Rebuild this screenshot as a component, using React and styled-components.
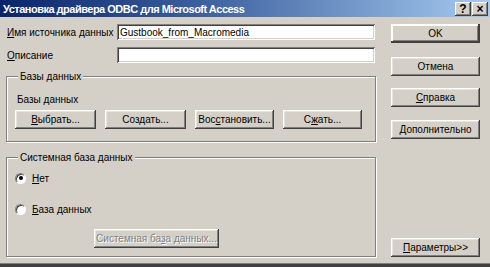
import styled, { createGlobalStyle, css } from 'styled-components';

const GlobalStyle = createGlobalStyle`
    html, body {
        margin: 0;
        padding: 0;
        background: #d4d0c8;
    }
    body {
        font-family: "Liberation Sans", Arial, sans-serif;
        font-size: 10px;
        color: #000;
    }
`;

const Window = styled.div`
    width: 490px;
    height: 267px;
    box-sizing: border-box;
    background: #d4d0c8;
    display: flex;
    flex-direction: column;
    border-bottom: 3px solid #404040;
    box-shadow: inset 0 -1px 0 #808080;
`;

const TitleBar = styled.div`
    height: 17px;
    flex: none;
    display: flex;
    align-items: center;
    padding: 0 2px 0 3px;
    background: linear-gradient(to right, #0a246a 0%, #3a5e9c 40%, #a6caf0 100%);
    color: #fff;
    font-weight: bold;
    font-size: 11px;
`;

const Title = styled.span`
    flex: 1;
    white-space: nowrap;
    letter-spacing: -0.5px;
`;

const CaptionButton = styled.button`
    width: 16px;
    height: 14px;
    padding: 0;
    margin-left: ${p => p.$gap || 0}px;
    border: none;
    background: #d4d0c8;
    color: #000;
    font-family: "Liberation Sans", Arial, sans-serif;
    font-weight: bold;
    font-size: 12px;
    line-height: 14px;
    box-shadow: inset -1px -1px #404040, inset 1px 1px #fff, inset -2px -2px #808080;
`;

const Body = styled.div`
    flex: 1;
    display: flex;
    padding: 7px 10px 0 6px;
`;

const LeftColumn = styled.div`
    width: 370px;
    display: flex;
    flex-direction: column;
`;

const RightColumn = styled.div`
    margin-left: 15px;
    width: 89px;
    display: flex;
    flex-direction: column;
`;

const FieldRow = styled.div`
    display: flex;
    align-items: center;
    height: 16px;
    margin-bottom: ${p => p.$mb || 0}px;
`;

const Label = styled.label`
    width: 110px;
    padding-left: 1px;
    white-space: nowrap;
`;

const TextInput = styled.input`
    width: 258px;
    height: 16px;
    box-sizing: border-box;
    border: none;
    padding: 1px 3px 0;
    background: #fff;
    font-family: "Liberation Sans", Arial, sans-serif;
    font-size: 10px;
    box-shadow: inset 1px 1px #808080, inset -1px -1px #fff, inset 2px 2px #404040, inset -2px -2px #d4d0c8;
    outline: none;
`;

const Group = styled.fieldset`
    margin: ${p => p.$mt || 0}px 0 0;
    padding: 0 8px;
    height: ${p => p.$h}px;
    box-sizing: border-box;
    border: 1px solid #808080;
    box-shadow: 1px 1px 0 #fff, inset 1px 1px 0 #fff;
    display: flex;
    flex-direction: column;
`;

const Legend = styled.legend`
    padding: 0 2px;
    margin-left: 3px;
    background: #d4d0c8;
    line-height: 13px;
`;

const GroupText = styled.div`
    margin: 11px 0 5px 2px;
`;

const ButtonRow = styled.div`
    display: flex;
    gap: 9px;
`;

const Button = styled.button`
    width: ${p => p.$w || 89}px;
    height: 19px;
    flex: none;
    padding: 0;
    margin-top: ${p => p.$mt || 0}px;
    margin-left: ${p => p.$ml || 0}px;
    border: none;
    background: #d4d0c8;
    color: #000;
    font-family: "Liberation Sans", Arial, sans-serif;
    font-size: 10px;
    white-space: nowrap;
    box-shadow: inset -1px -1px #404040, inset 1px 1px #fff, inset -2px -2px #808080, inset 2px 2px #e6e4de;
    ${p => p.$default && css`
        box-shadow: inset -2px -2px #404040, inset 2px 2px #fff, inset -3px -3px #808080, inset 0 0 0 1px #000;
    `}
    ${p => p.disabled && css`
        color: #808080;
        text-shadow: 1px 1px 0 #fff;
    `}
`;

const RadioRow = styled.label`
    display: flex;
    align-items: center;
    gap: 6px;
    height: 12px;
    margin: ${p => p.$mt || 0}px 0 0 0;
`;

const RadioDot = styled.span`
    width: 11px;
    height: 11px;
    box-sizing: border-box;
    border-radius: 50%;
    background: #fff;
    border: 1px solid;
    border-color: #808080 #fff #fff #808080;
    box-shadow: inset 1px 1px 0 #404040;
    display: flex;
    align-items: center;
    justify-content: center;
    &::after {
        content: '';
        width: 4px;
        height: 4px;
        border-radius: 50%;
        background: ${p => (p.$checked ? '#000' : 'transparent')};
    }
`;

const Mn = styled.span`
    text-decoration: underline;
`;

const Spacer = styled.div`
    flex: 1;
`;

export default function App() {
    return (
        <>
            <GlobalStyle />
            <Window>
                <TitleBar>
                    <Title>Установка драйвера ODBC для Microsoft Access</Title>
                    <CaptionButton>?</CaptionButton>
                    <CaptionButton $gap={1}>×</CaptionButton>
                </TitleBar>
                <Body>
                    <LeftColumn>
                        <FieldRow $mb={7}>
                            <Label><Mn>И</Mn>мя источника данных</Label>
                            <TextInput defaultValue="Gustbook_from_Macromedia" />
                        </FieldRow>
                        <FieldRow>
                            <Label><Mn>О</Mn>писание</Label>
                            <TextInput />
                        </FieldRow>

                        <Group $mt={7} $h={72}>
                            <Legend>Базы данных</Legend>
                            <GroupText>Базы данных</GroupText>
                            <ButtonRow>
                                <Button $w={81}><Mn>В</Mn>ыбрать...</Button>
                                <Button $w={81}>Соз<Mn>д</Mn>ать...</Button>
                                <Button $w={79}>Вос<Mn>с</Mn>тановить...</Button>
                                <Button $w={79}>С<Mn>ж</Mn>ать...</Button>
                            </ButtonRow>
                        </Group>

                        <Group $mt={9} $h={106}>
                            <Legend>Системная база данных</Legend>
                            <RadioRow $mt={8}>
                                <RadioDot $checked />
                                <span><Mn>Н</Mn>ет</span>
                            </RadioRow>
                            <RadioRow $mt={19}>
                                <RadioDot />
                                <span><Mn>Б</Mn>аза данных</span>
                            </RadioRow>
                            <Button $w={125} $mt={14} $ml={79} disabled>
                                Системная ба<Mn>з</Mn>а данных...
                            </Button>
                        </Group>
                    </LeftColumn>

                    <RightColumn>
                        <Button $default>OK</Button>
                        <Button $mt={14}>Отмена</Button>
                        <Button $mt={12}><Mn>С</Mn>правка</Button>
                        <Button $mt={13}><Mn>Д</Mn>ополнительно</Button>
                        <Spacer />
                        <Button style={{ marginBottom: 7 }}><Mn>П</Mn>араметры&gt;&gt;</Button>
                    </RightColumn>
                </Body>
            </Window>
        </>
    );
}
